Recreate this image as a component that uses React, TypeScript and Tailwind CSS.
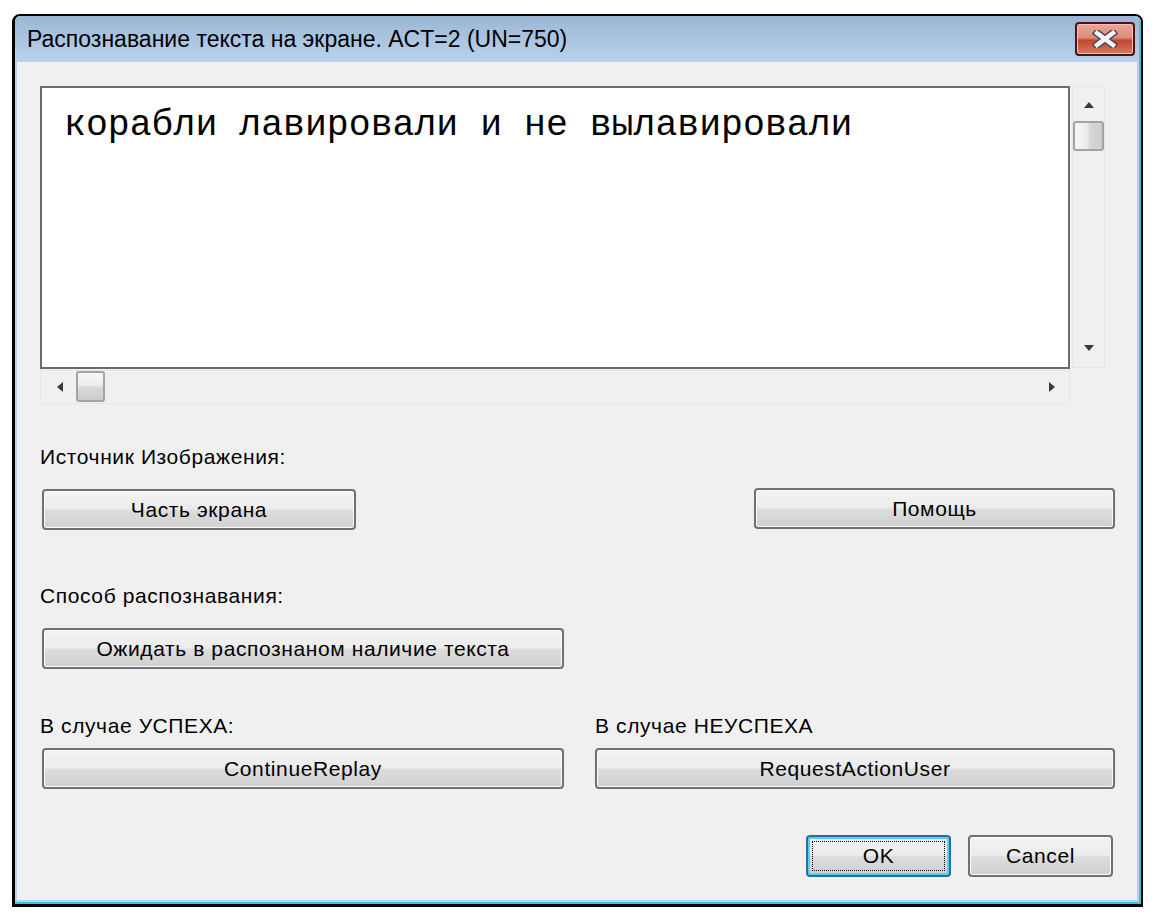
const ui = { fontFamily: '"Liberation Sans", Arial, sans-serif' };

const Btn = ({ className = '', children }: { className?: string; children: React.ReactNode }) => (
  <div
    className={`h-[41px] flex items-center justify-center rounded-[4px] border-2 border-[#707070] bg-[linear-gradient(to_bottom,#f3f3f3_0%,#ececec_48%,#dddddd_52%,#d0d0d0_100%)] shadow-[inset_0_0_0_1px_#fbfbfb] text-[21px] tracking-[0.6px] text-black ${className}`}
    style={ui}
  >
    {children}
  </div>
);

const Arrow = ({ dir }: { dir: 'up' | 'down' | 'left' | 'right' }) => {
  const pts = {
    up: '0,6 5,0 10,6',
    down: '0,0 10,0 5,6',
    left: '6,0 6,10 0,5',
    right: '0,0 6,5 0,10',
  }[dir];
  const v = dir === 'up' || dir === 'down';
  return (
    <svg width={v ? 10 : 6} height={v ? 6 : 10} viewBox={v ? '0 0 10 6' : '0 0 6 10'}>
      <polygon points={pts} fill="#3a3a3a" />
    </svg>
  );
};

const CloseButton = () => (
  <div className="w-[60px] h-[34px] rounded-[4px] border-2 border-[#4a1414] bg-[linear-gradient(to_bottom,#eaa899_0%,#dc8c7a_45%,#c3472f_55%,#d57b63_100%)] flex items-center justify-center shadow-[inset_0_0_0_1px_#f2c2b6]">
    <svg width="26" height="18" viewBox="0 0 26 18">
      <path d="M5 3 L21 15 M21 3 L5 15" stroke="#4a4a58" strokeWidth="7.5" strokeLinecap="square" />
      <path d="M5 3 L21 15 M21 3 L5 15" stroke="#f4f4f4" strokeWidth="4.5" strokeLinecap="square" />
    </svg>
  </div>
);

export default function App() {
  return (
    <div className="w-[1156px] h-[921px] bg-white pt-[14px] pl-[12px]">
      <div className="w-[1131px] h-[893px] flex flex-col border-t-2 border-l-[3px] border-r-2 border-b-[3px] border-black rounded-t-[8px] overflow-hidden">
        <div className="flex-1 flex flex-col border-r-2 border-b-2 border-[#3ec4e2]">
          {/* title bar */}
          <div className="h-[46px] flex items-center justify-between pl-[12px] pr-[4px] bg-[linear-gradient(to_bottom,#9bb6d4,#bad2eb)]">
            <span className="text-[23px] text-black" style={ui}>
              Распознавание текста на экране. ACT=2 (UN=750)
            </span>
            <CloseButton />
          </div>

          {/* client area */}
          <div className="flex-1 flex flex-col bg-[#f0f0f0] border-l-2 border-r-2 border-b-2 border-[#b9d1ea] pl-[23px]">
            <div className="mt-[24px] flex gap-[2px]">
              <div className="flex flex-col">
                <div className="w-[1030px] h-[283px] bg-white border-2 border-[#6b6b6b] pl-[22px] pt-[16px]">
                  <div className="text-[36.5px] leading-[44px] text-black" style={{ fontFamily: '"Liberation Mono", "Courier New", monospace' }}>
                    корабли лавировали и не вылавировали
                  </div>
                </div>
                <div className="mt-[1px] w-[1030px] h-[34px] border border-[#e6e6e6] flex items-center">
                  <div className="w-[35px] flex justify-center pl-[2px]">
                    <Arrow dir="left" />
                  </div>
                  <div className="w-[29px] h-[31px] -mt-[2px] rounded-[3px] border-2 border-[#a3a3a3] bg-[linear-gradient(to_bottom,#f7f7f7_0%,#ececec_45%,#d8d8d8_55%,#cccccc_100%)]" />
                  <div className="flex-1" />
                  <div className="w-[34px] flex justify-center">
                    <Arrow dir="right" />
                  </div>
                </div>
              </div>
              <div className="w-[33px] h-[282px] border border-[#e6e6e6] flex flex-col items-center">
                <div className="h-[34px] flex items-center justify-center pt-[2px]">
                  <Arrow dir="up" />
                </div>
                <div className="w-[31px] h-[30px] rounded-[3px] border-2 border-[#a3a3a3] bg-[linear-gradient(to_right,#f7f7f7_0%,#ececec_45%,#d8d8d8_55%,#cccccc_100%)]" />
                <div className="flex-1" />
                <div className="h-[34px] flex items-center justify-center pb-[4px]">
                  <Arrow dir="down" />
                </div>
              </div>
            </div>

            <div className="mt-[43px] h-[20px] leading-[20px] text-[21px] tracking-[0.6px] text-black" style={ui}>
              Источник Изображения:
            </div>
            <div className="mt-[21px] flex items-start">
              <Btn className="ml-[2px] mt-[1px] w-[314px]">Часть экрана</Btn>
              <div className="flex-1" />
              <Btn className="w-[361px] h-[40px] mr-[22px]">Помощь</Btn>
            </div>

            <div className="mt-[56px] h-[20px] leading-[20px] text-[21px] tracking-[0.6px] text-black" style={ui}>
              Способ распознавания:
            </div>
            <div className="mt-[22px] flex">
              <Btn className="ml-[2px] w-[522px]">Ожидать в распознаном наличие текста</Btn>
            </div>

            <div className="mt-[47px] flex h-[20px] leading-[20px] text-[21px] tracking-[0.6px] text-black" style={ui}>
              <div className="w-[555px]">В случае УСПЕХА:</div>
              <div>В случае НЕУСПЕХА</div>
            </div>
            <div className="mt-[12px] flex">
              <Btn className="ml-[2px] w-[522px]">ContinueReplay</Btn>
              <Btn className="ml-[31px] w-[520px]">RequestActionUser</Btn>
            </div>

            <div className="mt-[46px] flex">
              <div className="ml-[766px] w-[145px] h-[42px] rounded-[4px] border-2 border-[#2f6c9c] shadow-[inset_0_0_0_2px_#4fd3f3] bg-[linear-gradient(to_bottom,#f3f3f3_0%,#ececec_48%,#dddddd_52%,#d0d0d0_100%)] p-[4px]">
                <div className="w-full h-full border border-dotted border-black flex items-center justify-center text-[21px] tracking-[0.6px] text-black" style={ui}>
                  OK
                </div>
              </div>
              <Btn className="ml-[17px] w-[145px] h-[42px]">Cancel</Btn>
            </div>
          </div>
        </div>
      </div>
    </div>
  );
}
